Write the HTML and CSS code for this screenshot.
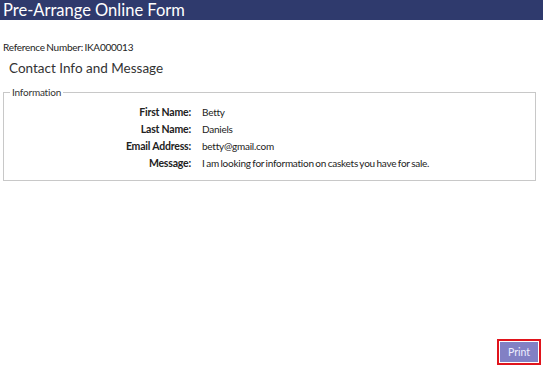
FILE: index.html
```html
<!DOCTYPE html>
<html>
<head>
<meta charset="utf-8">
<link rel="stylesheet" href="styles.css">
</head>
<body>
<div class="header">Pre-Arrange Online Form</div>
<div class="ref">Reference Number: IKA000013</div>
<h2 class="section-title">Contact Info and Message</h2>
<fieldset class="info">
  <legend>Information</legend>
  <div class="rows">
    <div class="label">First Name:</div><div class="value">Betty</div>
    <div class="label">Last Name:</div><div class="value">Daniels</div>
    <div class="label">Email Address:</div><div class="value">betty@gmail.com</div>
    <div class="label">Message:</div><div class="value">I am looking for information on caskets you have for sale.</div>
  </div>
</fieldset>
<div class="actions">
  <div class="print-frame"><button class="print-btn">Print</button></div>
</div>
</body>
</html>
```
FILE: styles.css
```css
html, body {
  margin: 0;
  padding: 0;
  background: #fff;
  font-family: Lato, "Open Sans", sans-serif;
  color: #222;
}
.header {
  height: 20px;
  line-height: 21px;
  background: #2f3a6d;
  color: #fff;
  font-size: 16.5px;
  padding-left: 3px;
  overflow: hidden;
}
.ref {
  margin-top: 21px;
  padding-left: 3px;
  font-size: 10px;
  letter-spacing: -0.25px;
  word-spacing: -0.8px;
  line-height: 13px;
}
.section-title {
  margin: 5px 0 0 9px;
  font-size: 13.5px;
  font-weight: normal;
  line-height: 18px;
  color: #333;
}
.info {
  margin: 9px 7px 0 3px;
  padding: 8px 0 10px 0;
  border: 1px solid #c8c8c8;
}
.info legend {
  margin-left: 6px;
  padding: 0 2px;
  font-size: 10px;
  letter-spacing: -0.2px;
  color: #333;
}
.rows {
  display: grid;
  grid-template-columns: 187px 1fr;
  column-gap: 11px;
  row-gap: 4px;
  line-height: 13px;
}
.label {
  text-align: right;
  font-weight: bold;
  font-size: 10.5px;
  letter-spacing: -0.2px;
}
.value {
  color: #222;
  font-size: 10px;
  letter-spacing: -0.25px;
  word-spacing: -0.7px;
}
.actions {
  display: flex;
  justify-content: flex-end;
  margin-top: 158px;
  padding-right: 2px;
}
.print-frame {
  border: 2px solid #e0141c;
  padding: 1px;
}
.print-btn {
  display: block;
  width: 38px;
  height: 20px;
  border: none;
  background: #8280c4;
  color: #eef;
  font-family: Lato, sans-serif;
  font-size: 10.5px;
  padding: 0;
}
```
